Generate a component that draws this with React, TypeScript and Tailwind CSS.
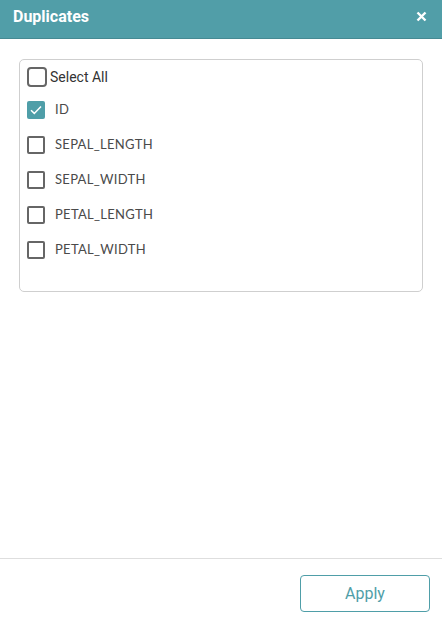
import React from "react";

const items = [
  { label: "ID", checked: true },
  { label: "SEPAL_LENGTH", checked: false },
  { label: "SEPAL_WIDTH", checked: false },
  { label: "PETAL_LENGTH", checked: false },
  { label: "PETAL_WIDTH", checked: false },
];

function Box({ checked }: { checked: boolean }) {
  if (checked) {
    return (
      <span className="flex h-[18px] w-[18px] items-center justify-center rounded-[2px] bg-[#4f9ea8]">
        <svg width="12" height="10" viewBox="0 0 12 10" fill="none">
          <path d="M1 5.2 L4.3 8.4 L11 1.4" stroke="white" strokeWidth="1.5" />
        </svg>
      </span>
    );
  }
  return <span className="block h-[18px] w-[18px] rounded-[2px] border-2 border-[#666]" />;
}

export default function App() {
  return (
    <div className="flex h-[622px] w-[442px] flex-col bg-white" style={{ fontFamily: "Roboto, sans-serif" }}>
      <div className="flex h-[39px] items-center justify-between border-b border-[#468a93] bg-[#519ea8] pb-[5px] pl-[13px] pr-[15px]">
        <span className="text-[16px] font-bold text-white">Duplicates</span>
        <svg width="11" height="11" viewBox="0 0 11 11">
          <path d="M1.5 1.5 L9.5 9.5 M9.5 1.5 L1.5 9.5" stroke="white" strokeWidth="2.4" />
        </svg>
      </div>
      <div className="flex-1 px-[19px] pt-[20px]">
        <div
          className="h-[233px] rounded-[5px] border border-[#cfcfcf] pl-[7px] pt-[6px]"
          style={{ fontFamily: "Lato, 'Open Sans', sans-serif" }}
        >
          <div className="flex h-[22px] items-center">
            <span className="block h-[20px] w-[20px] rounded-[4px] border-2 border-[#666]" />
            <span className="ml-[3px] text-[14px] text-[#333]" style={{ fontFamily: "Roboto, sans-serif" }}>Select All</span>
          </div>
          <div className="mt-[13px] flex flex-col gap-[17px]">
            {items.map((it) => (
              <div key={it.label} className="flex h-[18px] items-center">
                <Box checked={it.checked} />
                <span className="ml-[10px] text-[13px] tracking-[0.3px] text-[#4a4a4a]">{it.label}</span>
              </div>
            ))}
          </div>
        </div>
      </div>
      <div className="flex h-[64px] items-start justify-end border-t border-[#dedede] pr-[12px] pt-[16px]">
        <button className="flex h-[37px] w-[130px] items-center justify-center rounded-[4px] border border-[#4f9ea8] text-[16px] text-[#4f9ea8]">
          Apply
        </button>
      </div>
    </div>
  );
}
